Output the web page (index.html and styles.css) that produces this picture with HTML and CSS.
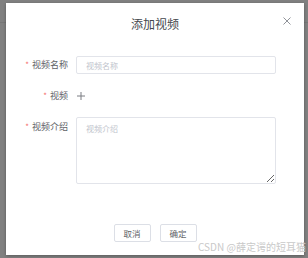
FILE: index.html
```html
<!DOCTYPE html>
<html lang="zh">
<head>
<meta charset="utf-8">
<title>添加视频</title>
<link rel="stylesheet" href="styles.css">
</head>
<body>
<div class="dialog">
  <div class="dialog-header">
    <span class="dialog-title">添加视频</span>
    <button class="dialog-close" aria-label="关闭">
      <svg width="8" height="8" viewBox="0 0 8 8"><path d="M0.5 0.5 L7.5 7.5 M7.5 0.5 L0.5 7.5" stroke="#909399" stroke-width="1" fill="none"/></svg>
    </button>
  </div>
  <form class="form">
    <div class="row row-name">
      <label class="label"><span class="star">*</span>视频名称</label>
      <input class="input" type="text" placeholder="视频名称">
    </div>
    <div class="row row-video">
      <label class="label"><span class="star">*</span>视频</label>
      <span class="plus">
        <svg width="8" height="8" viewBox="0 0 8 8"><path d="M4 0 V8 M0 4 H8" stroke="#7a7d82" stroke-width="1" fill="none"/></svg>
      </span>
    </div>
    <div class="row row-intro">
      <label class="label label-top"><span class="star">*</span>视频介绍</label>
      <textarea class="textarea" placeholder="视频介绍"></textarea>
    </div>
  </form>
  <div class="dialog-footer">
    <button class="btn" type="button">取消</button>
    <button class="btn" type="button">确定</button>
  </div>
</div>
<div class="watermark">CSDN @薛定谔的短耳猫</div>
</body>
</html>
```
FILE: styles.css
```css
html, body {
  margin: 0;
  padding: 0;
}
body {
  width: 308px;
  height: 258px;
  overflow: hidden;
  position: relative;
  background: #808080;
  background-image: linear-gradient(to bottom, transparent 22px, #767676 22px, #767676 23px, transparent 23px);
  font-family: "Noto Sans CJK SC", "Noto Sans", sans-serif;
  display: flex;
  align-items: flex-start;
}
.dialog {
  margin: 3px 0 0 6px;
  width: 298px;
  height: 252px;
  background: #fff;
  box-shadow: 0 1px 3px rgba(0,0,0,0.3);
  display: flex;
  flex-direction: column;
  position: relative;
}
.dialog-header {
  height: 42px;
  display: flex;
  align-items: center;
  justify-content: center;
  position: relative;
}
.dialog-title {
  font-size: 12px;
  line-height: 16px;
  color: #44474d;
}
.dialog-close {
  position: absolute;
  right: 13px;
  top: 14px;
  width: 8px;
  height: 8px;
  padding: 0;
  border: 0;
  background: none;
  display: flex;
}
.form {
  margin: 11px 0 0 0;
  display: flex;
  flex-direction: column;
}
.row {
  display: flex;
  align-items: center;
}
.row-video {
  margin-top: 13px;
  height: 18px;
}
.row-intro {
  margin-top: 12px;
  align-items: flex-start;
}
.label {
  width: 70px;
  padding-right: 8px;
  box-sizing: border-box;
  text-align: right;
  font-size: 9px;
  line-height: 18px;
  color: #606266;
  white-space: nowrap;
}
.label-top {
  line-height: 20px;
}
.star {
  color: #f56c6c;
  font-size: 8px;
  margin-right: 3px;
}
.input {
  width: 200px;
  height: 18px;
  box-sizing: border-box;
  border: 1px solid #e2e4ea;
  border-radius: 2px;
  padding: 0 9px;
  font-family: inherit;
  font-size: 8px;
  color: #606266;
  outline: none;
}
.input::placeholder, .textarea::placeholder {
  color: #c0c4cc;
}
.plus {
  display: flex;
  margin-left: 1px;
}
.textarea {
  width: 200px;
  height: 67px;
  box-sizing: border-box;
  border: 1px solid #e2e4ea;
  border-radius: 2px;
  padding: 5px 9px;
  margin: 0;
  font-family: inherit;
  font-size: 8px;
  line-height: 11px;
  color: #606266;
  outline: none;
  resize: both;
  display: block;
}
.dialog-footer {
  margin-top: 40px;
  display: flex;
  justify-content: center;
  gap: 9px;
}
.btn {
  width: 37px;
  height: 18px;
  box-sizing: border-box;
  border: 1px solid #dcdfe6;
  border-radius: 2px;
  background: #fff;
  color: #606266;
  font-family: inherit;
  font-size: 8.5px;
  padding: 0;
  display: flex;
  align-items: center;
  justify-content: center;
}
.watermark {
  position: absolute;
  left: 198px;
  top: 240px;
  font-size: 10px;
  line-height: 13px;
  color: #c9c9c9;
  white-space: nowrap;
  letter-spacing: 0;
}
```
